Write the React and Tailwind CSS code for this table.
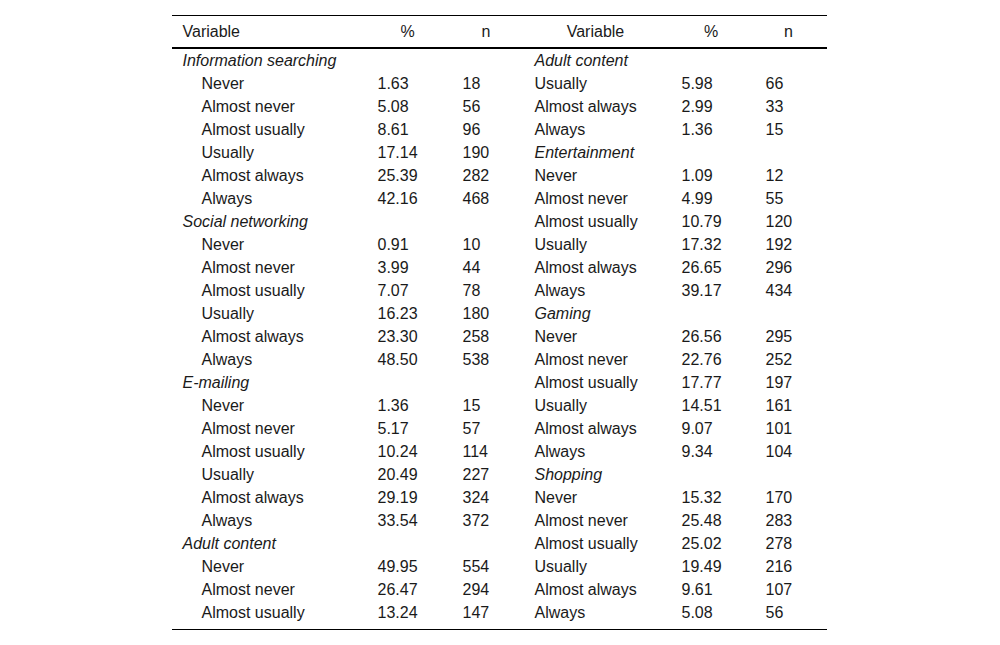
import React from 'react';

const left = [
  { group: 'Information searching' },
  ['Never', '1.63', '18'],
  ['Almost never', '5.08', '56'],
  ['Almost usually', '8.61', '96'],
  ['Usually', '17.14', '190'],
  ['Almost always', '25.39', '282'],
  ['Always', '42.16', '468'],
  { group: 'Social networking' },
  ['Never', '0.91', '10'],
  ['Almost never', '3.99', '44'],
  ['Almost usually', '7.07', '78'],
  ['Usually', '16.23', '180'],
  ['Almost always', '23.30', '258'],
  ['Always', '48.50', '538'],
  { group: 'E-mailing' },
  ['Never', '1.36', '15'],
  ['Almost never', '5.17', '57'],
  ['Almost usually', '10.24', '114'],
  ['Usually', '20.49', '227'],
  ['Almost always', '29.19', '324'],
  ['Always', '33.54', '372'],
  { group: 'Adult content' },
  ['Never', '49.95', '554'],
  ['Almost never', '26.47', '294'],
  ['Almost usually', '13.24', '147'],
];

const right = [
  { group: 'Adult content' },
  ['Usually', '5.98', '66'],
  ['Almost always', '2.99', '33'],
  ['Always', '1.36', '15'],
  { group: 'Entertainment' },
  ['Never', '1.09', '12'],
  ['Almost never', '4.99', '55'],
  ['Almost usually', '10.79', '120'],
  ['Usually', '17.32', '192'],
  ['Almost always', '26.65', '296'],
  ['Always', '39.17', '434'],
  { group: 'Gaming' },
  ['Never', '26.56', '295'],
  ['Almost never', '22.76', '252'],
  ['Almost usually', '17.77', '197'],
  ['Usually', '14.51', '161'],
  ['Almost always', '9.07', '101'],
  ['Always', '9.34', '104'],
  { group: 'Shopping' },
  ['Never', '15.32', '170'],
  ['Almost never', '25.48', '283'],
  ['Almost usually', '25.02', '278'],
  ['Usually', '19.49', '216'],
  ['Almost always', '9.61', '107'],
  ['Always', '5.08', '56'],
];

const cell = "pl-[10px] pr-[15px] p-0 h-[23px] whitespace-nowrap";

const Side = ({ row, first }) => {
  if (row.group) {
    return (
      <>
        <td className={`${cell} italic ${first ? 'pl-[11px]' : ''}`}>{row.group}</td>
        <td className={cell} />
        <td className={cell} />
      </>
    );
  }
  return (
    <>
      <td className={`${cell} ${first ? 'pl-[30px]' : ''}`}>{row[0]}</td>
      <td className={cell}>{row[1]}</td>
      <td className={cell}>{row[2]}</td>
    </>
  );
};

export default function App() {
  return (
    <div className="w-full min-h-screen bg-white pt-[15px]" style={{ fontFamily: '"Liberation Sans", Arial, sans-serif' }}>
      <div className="w-[655px] mx-auto -translate-x-[1px] border-t border-b border-black pb-[5px] text-[16px] leading-[23px] text-[#1a1a1a]">
        <table className="w-[655px] table-fixed border-collapse">
          <colgroup>
            <col className="w-[196px]" />
            <col className="w-[85px]" />
            <col className="w-[72px]" />
            <col className="w-[147px]" />
            <col className="w-[84px]" />
            <col className="w-[71px]" />
          </colgroup>
          <thead>
            <tr className="h-[32px] border-b-2 border-black">
              <th className="font-normal text-left pl-[11px] pb-[1px]">Variable</th>
              <th className="font-normal text-center pl-[10px] pr-[15px] pb-[1px]">%</th>
              <th className="font-normal text-center pl-[10px] pr-[15px] pb-[1px]">n</th>
              <th className="font-normal text-center pl-[10px] pr-[15px] pb-[1px]">Variable</th>
              <th className="font-normal text-center pl-[10px] pr-[15px] pb-[1px]">%</th>
              <th className="font-normal text-center pl-[10px] pr-[15px] pb-[1px]">n</th>
            </tr>
          </thead>
          <tbody>
            {left.map((row, i) => (
              <tr key={i}>
                <Side row={row} first />
                <Side row={right[i]} />
              </tr>
            ))}
          </tbody>
        </table>
      </div>
    </div>
  );
}
